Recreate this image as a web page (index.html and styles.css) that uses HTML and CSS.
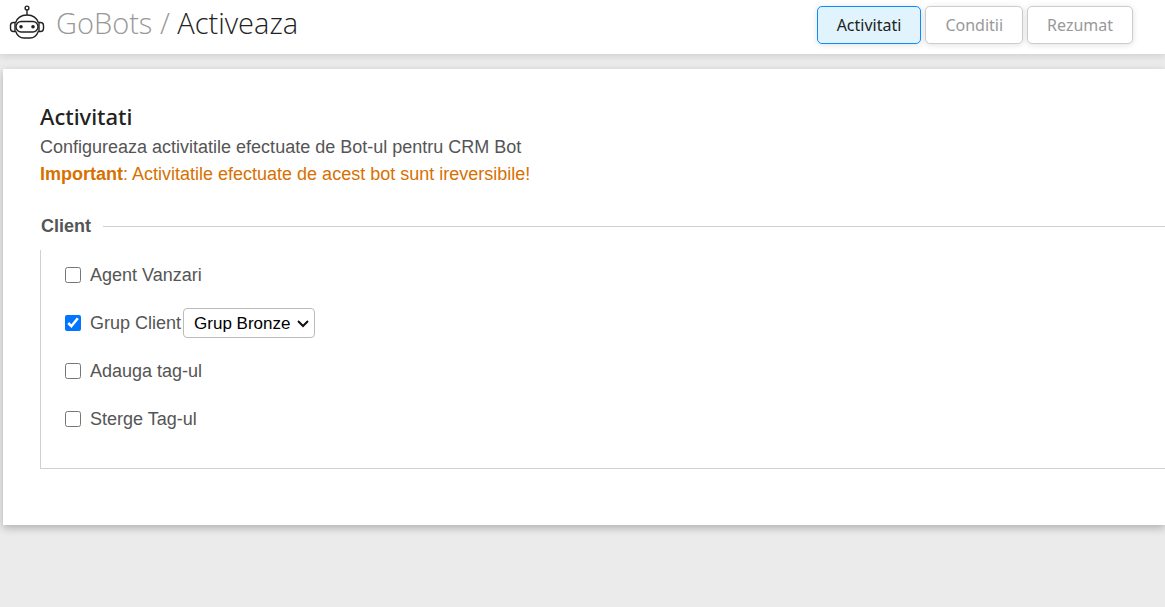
FILE: index.html
```html
<!DOCTYPE html>
<html lang="ro">
<head>
  <meta charset="UTF-8">
  <meta name="viewport" content="width=device-width, initial-scale=1.0">
  <title>GoBots / Activeaza</title>
  <link rel="stylesheet" href="styles.css">
</head>
<body>
<header class="topbar">
  <svg class="logo" viewBox="0 0 36 36" fill="none" stroke="#222" stroke-width="1.4">
    <circle cx="18" cy="4" r="1.9"/>
    <path d="M18 6v5"/>
    <path d="M6.500 19C8 14 12 11 18 11s10 3 11.500 8"/>
    <path d="M6.500 27c1.500 4 4.500 7 8.500 7h6c4 0 7-3 8.500-7"/>
    <rect x="7" y="17.500" width="22" height="10.500" rx="5.200"/>
    <path d="M6 18.500H4.500c-2 0-3 1-3 3v3c0 2 1 3 3 3H6zM30 18.500h1.500c2 0 3 1 3 3v3c0 2-1 3-3 3H30z"/>
    <circle cx="12" cy="22.800" r="1.100" fill="#111"/>
    <circle cx="24" cy="22.800" r="1.100" fill="#111"/>
  </svg>
  <h1 class="title"><span class="muted">GoBots /</span> Activeaza</h1>
  <nav class="steps">
    <button type="button" class="step active">Activitati</button>
    <button type="button" class="step">Conditii</button>
    <button type="button" class="step">Rezumat</button>
  </nav>
</header>
<main class="panel">
  <h2 class="heading">Activitati</h2>
  <p class="text">Configureaza activitatile efectuate de Bot-ul pentru CRM Bot</p>
  <p class="text warning"><b>Important</b>: Activitatile efectuate de acest bot sunt ireversibile!</p>
  <h3 class="group-title">Client</h3>
  <div class="group">
    <div class="option">
      <input type="checkbox" id="agent">
      <label for="agent">Agent Vanzari</label>
    </div>
    <div class="option">
      <input type="checkbox" id="grup" checked>
      <label for="grup">Grup Client</label>
      <span class="select-wrap">
        <select class="select" aria-label="Grup Client">
          <option>Grup Bronze</option>
        </select>
        <svg class="arrow" viewBox="0 0 12 8" fill="none" stroke="#111" stroke-width="2"><path d="M1 1l5 5 5-5"/></svg>
      </span>
    </div>
    <div class="option">
      <input type="checkbox" id="adauga">
      <label for="adauga">Adauga tag-ul</label>
    </div>
    <div class="option">
      <input type="checkbox" id="sterge">
      <label for="sterge">Sterge Tag-ul</label>
    </div>
  </div>
</main>
</body>
</html>
```
FILE: styles.css
```css
*{
  box-sizing: border-box;
  margin: 0;
  padding: 0;
}
body{
  min-height: 100vh;
  background-color: #ebebeb;
  color: #555;
  font-family: "Liberation Sans", Arial, sans-serif;
  font-size: 18px;
}
.topbar{
  display: flex;
  align-items: center;
  height: 54px;
  padding: 0 32px 4px 9px;
  background-color: #fff;
  box-shadow: 0 1px 8px rgba(0, 0, 0, 0.15);
}
.logo{
  width: 36px;
  height: 36px;
  margin-bottom: 6px;
}
.title{
  margin: 0 0 6px 11px;
  color: #222;
  font-family: "Open Sans", sans-serif;
  font-size: 29px;
  font-weight: 300;
}
.muted{
  color: #999;
}
.steps{
  display: flex;
  gap: 4px;
  margin-left: auto;
}
.step{
  height: 38px;
  padding: 0 19px;
  border: 1px solid #ccc;
  border-radius: 5px;
  background-color: #fff;
  box-shadow: 0 1px 6px rgba(0, 0, 0, 0.12);
  color: #999;
  font-family: "Noto Sans", sans-serif;
  font-size: 16px;
}
.step.active{
  border-color: #0a8cff;
  background-color: #e1f4fe;
  color: #222;
}
.panel{
  margin: 15px 0 0 3px;
  padding: 32px 0 56px 37px;
  background-color: #fff;
  box-shadow: 0 3px 8px rgba(0, 0, 0, 0.25);
}
.heading{
  margin-bottom: 3px;
  color: #222;
  font-family: "Noto Sans", sans-serif;
  font-size: 22px;
  font-weight: 500;
  line-height: 30px;
}
.text{
  line-height: 27px;
}
.warning{
  color: #d87000;
}
.group-title{
  display: flex;
  align-items: center;
  gap: 12px;
  margin: 28px 0 14px 1px;
  font-size: 18px;
  line-height: 20px;
}
.group-title::after{
  content: "";
  flex: 1;
  height: 1px;
  background-color: #d0d0d0;
}
.group{
  display: grid;
  gap: 18px;
  padding: 10px 0 34px 24px;
  border-left: 1px solid #d0d0d0;
  border-bottom: 1px solid #d0d0d0;
}
.option{
  display: flex;
  align-items: center;
  height: 30px;
}
.option input{
  width: 16px;
  height: 16px;
  margin-right: 9px;
  accent-color: #0075ff;
}
.select-wrap{
  position: relative;
  margin-left: 2px;
}
.select{
  display: block;
  width: 132px;
  height: 30px;
  padding: 0 10px;
  appearance: none;
  border: 1px solid #bbb;
  border-radius: 4px;
  background-color: #fff;
  color: #000;
  font-family: inherit;
  font-size: 17px;
}
.arrow{
  position: absolute;
  top: 12px;
  right: 6px;
  width: 12px;
  height: 8px;
  pointer-events: none;
}
```
